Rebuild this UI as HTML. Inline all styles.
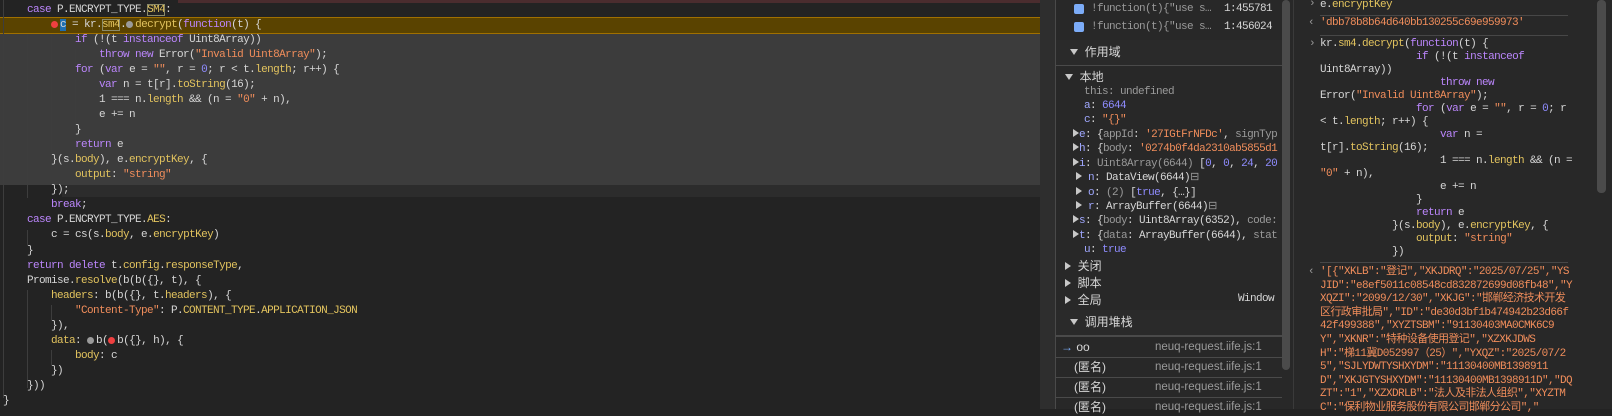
<!DOCTYPE html>
<html><head><meta charset="utf-8"><style>
*{margin:0;padding:0;box-sizing:border-box}
body{width:1612px;height:409px;overflow:hidden;background:#232323;position:relative;font-family:"Liberation Mono",monospace;font-size:11px;letter-spacing:-0.6px;color:#d6d6d6}
.abs{position:absolute}
.k{color:#bb86fc}.p{color:#e2c35e}.s{color:#f08d5b}.n{color:#8f8cff}.g{color:#9a9a9a}
#ed{left:0;top:0;width:1040px;height:409px;background:#232323;overflow:hidden}
.ln{position:absolute;left:3px;height:15px;line-height:15px;white-space:pre}
.guide{position:absolute;width:1px;background:#3d3d3d}
.dot{display:inline-block;width:7px;height:7px;border-radius:50%;margin:0 2px 0 0;vertical-align:-0.5px}
.box{outline:1px solid #8a8a6a;outline-offset:-1px}
#side{left:1040px;top:0;width:253px;height:409px;background:#282828}
.sr{position:absolute;white-space:pre;height:15px;line-height:15px}
.cjk{font-family:"Liberation Sans","Noto Sans CJK SC",sans-serif;font-size:12px;letter-spacing:0}
.tri{display:inline-block;width:0;height:0;border-left:4px solid transparent;border-right:4px solid transparent;border-top:6px solid #c8c8c8;vertical-align:1px}
.trr{display:inline-block;width:0;height:0;border-top:4px solid transparent;border-bottom:4px solid transparent;border-left:6px solid #c8c8c8;vertical-align:0px}
#con{left:1293px;top:0;width:319px;height:409px;background:#282828;border-left:1px solid #3a3a3a}
.cl{position:absolute;left:26px;white-space:pre;line-height:13px}
.sep{position:absolute;left:26px;width:248px;height:1px;background:#474747}
</style></head><body>
<div id="ed" class="abs">
<div class="abs" style="left:178px;top:0;width:862px;height:3px;background:#4a2c2e"></div>
<div class="abs" style="left:0;top:17px;width:1040px;height:17px;background:#5a4300;border-top:1px solid #a07000;border-bottom:1px solid #a07000"></div>
<div class="abs" style="left:0;top:34px;width:1040px;height:151px;background:#3c3c3c"></div>
<div class="abs" style="left:62px;top:185px;width:978px;height:12px;background:#2c2c2c"></div>
<div class="guide" style="left:3px;top:0;height:398px"></div>
<div class="guide" style="left:27px;top:34px;height:164px"></div>
<div class="guide" style="left:27px;top:230px;height:15px"></div>
<div class="guide" style="left:27px;top:290px;height:98px"></div>
<div class="guide" style="left:51px;top:34px;height:136px"></div>
<div class="guide" style="left:51px;top:305px;height:15px"></div>
<div class="guide" style="left:51px;top:350px;height:15px"></div>
<div class="guide" style="left:75px;top:49px;height:15px"></div>
<div class="guide" style="left:75px;top:79px;height:45px"></div>
<div class="ln" style="top:3px">    <span class="k">case</span> P.ENCRYPT_TYPE.<span class="p box">SM4</span>:</div>
<div class="ln" style="top:18px">        <span class="dot" style="background:#ef4040"></span><span style="background:#1f6fb0">c</span> = kr.<span class="p box">sm4</span>.<span class="dot" style="background:#9a9a9a"></span><span class="p">decrypt</span>(<span class="k">function</span>(t) {</div>
<div class="ln" style="top:33px">            <span class="k">if</span> (!(t <span class="k">instanceof</span> Uint8Array))</div>
<div class="ln" style="top:48px">                <span class="k">throw new</span> Error(<span class="s">"Invalid Uint8Array"</span>);</div>
<div class="ln" style="top:63px">            <span class="k">for</span> (<span class="k">var</span> e = <span class="s">""</span>, r = <span class="n">0</span>; r &lt; t.<span class="p">length</span>; r++) {</div>
<div class="ln" style="top:78px">                <span class="k">var</span> n = t[r].<span class="p">toString</span>(16);</div>
<div class="ln" style="top:93px">                1 === n.<span class="p">length</span> &amp;&amp; (n = <span class="s">"0"</span> + n),</div>
<div class="ln" style="top:108px">                e += n</div>
<div class="ln" style="top:123px">            }</div>
<div class="ln" style="top:138px">            <span class="k">return</span> e</div>
<div class="ln" style="top:153px">        }(s.<span class="p">body</span>), e.<span class="p">encryptKey</span>, {</div>
<div class="ln" style="top:168px">            <span class="p">output</span>: <span class="s">"string"</span></div>
<div class="ln" style="top:183px">        });</div>
<div class="ln" style="top:198px">        <span class="k">break</span>;</div>
<div class="ln" style="top:213px">    <span class="k">case</span> P.ENCRYPT_TYPE.<span class="p">AES</span>:</div>
<div class="ln" style="top:228px">        c = cs(s.<span class="p">body</span>, e.<span class="p">encryptKey</span>)</div>
<div class="ln" style="top:244px">    }</div>
<div class="ln" style="top:259px">    <span class="k">return delete</span> t.<span class="p">config</span>.<span class="p">responseType</span>,</div>
<div class="ln" style="top:274px">    Promise.<span class="p">resolve</span>(b(b({}, t), {</div>
<div class="ln" style="top:289px">        <span class="p">headers</span>: b(b({}, t.<span class="p">headers</span>), {</div>
<div class="ln" style="top:304px">            <span class="s">"Content-Type"</span>: P.<span class="p">CONTENT_TYPE</span>.<span class="p">APPLICATION_JSON</span></div>
<div class="ln" style="top:319px">        }),</div>
<div class="ln" style="top:334px">        <span class="p">data</span>: <span class="dot" style="background:#9a9a9a"></span>b(<span class="dot" style="background:#ef4040"></span>b({}, h), {</div>
<div class="ln" style="top:349px">            <span class="p">body</span>: c</div>
<div class="ln" style="top:364px">        })</div>
<div class="ln" style="top:379px">    }))</div>
<div class="ln" style="top:394px">}</div>
</div>

<div id="side" class="abs">
<div class="abs" style="left:0;top:0;width:15px;height:409px;background:#2e2e2e"></div>
<div class="abs" style="left:15px;top:0;width:1px;height:409px;background:#4a4a4a"></div>
<div class="abs" style="left:16px;top:40px;width:226px;height:26px;background:#2a2a2a;border-bottom:1px solid #4a4a4a"></div>
<div class="abs" style="left:16px;top:310px;width:226px;height:27px;background:#2a2a2a;border-bottom:2px solid #4a4a4a"></div>
<div class="abs" style="left:16px;top:357px;width:226px;height:1px;background:#4a4a4a"></div>
<div class="abs" style="left:16px;top:377px;width:226px;height:1px;background:#4a4a4a"></div>
<div class="abs" style="left:16px;top:397px;width:226px;height:1px;background:#4a4a4a"></div>
<div class="abs" style="left:242px;top:0;width:11px;height:409px;background:#282828"></div>
<div class="abs" style="left:242px;top:0;width:8px;height:370px;background:#4b4b4b;border-radius:4px"></div>
<div class="abs" style="left:34px;top:4px;width:10px;height:10px;background:#7cacf8;border-radius:2px"></div>
<div class="abs" style="left:34px;top:22px;width:10px;height:10px;background:#7cacf8;border-radius:2px"></div>
<div class="sr g" style="left:51px;top:2px">!function(t){"use s…</div><div class="sr" style="left:184px;top:2px">1:455781</div>
<div class="sr g" style="left:51px;top:20px">!function(t){"use s…</div><div class="sr" style="left:184px;top:20px">1:456024</div>
<div class="sr cjk" style="left:30px;top:44px;line-height:16px"><span class="tri"></span>  作用域</div>
<div class="sr cjk" style="left:25px;top:69px;line-height:16px"><span class="tri"></span>  本地</div>
<div class="sr g" style="left:44px;top:85px">this: undefined</div>
<div class="sr" style="left:44px;top:99px"><span style="color:#a0a8ff">a</span>: <span class="n">6644</span></div>
<div class="sr" style="left:44px;top:113px"><span style="color:#a0a8ff">c</span>: <span class="s">"{}"</span></div>
<div class="sr" style="left:33px;top:128px"><span class="trr"></span><span style="color:#a0a8ff">e</span>: {<span class="g">appId</span>: <span class="s">'27IGtFrNFDc'</span>, <span class="g">signTyp</span></div>
<div class="sr" style="left:33px;top:142px"><span class="trr"></span><span style="color:#a0a8ff">h</span>: {<span class="g">body</span>: <span class="s">'0274b0f4da2310ab5855d1</span></div>
<div class="sr" style="left:33px;top:157px"><span class="trr"></span><span style="color:#a0a8ff">i</span>: <span class="g">Uint8Array(6644)</span> [<span class="n">0</span>, <span class="n">0</span>, <span class="n">24</span>, <span class="n">20</span></div>
<div class="sr" style="left:36px;top:171px"><span class="trr"></span> <span style="color:#a0a8ff">n</span>: DataView(6644)<span class="g">⊟</span></div>
<div class="sr" style="left:36px;top:186px"><span class="trr"></span> <span style="color:#a0a8ff">o</span>: <span class="g">(2)</span> [<span class="n">true</span>, {…}]</div>
<div class="sr" style="left:36px;top:200px"><span class="trr"></span> <span style="color:#a0a8ff">r</span>: ArrayBuffer(6644)<span class="g">⊟</span></div>
<div class="sr" style="left:33px;top:214px"><span class="trr"></span><span style="color:#a0a8ff">s</span>: {<span class="g">body</span>: Uint8Array(6352), <span class="g">code:</span></div>
<div class="sr" style="left:33px;top:229px"><span class="trr"></span><span style="color:#a0a8ff">t</span>: {<span class="g">data</span>: ArrayBuffer(6644), <span class="g">stat</span></div>
<div class="sr" style="left:44px;top:243px"><span style="color:#a0a8ff">u</span>: <span class="n">true</span></div>
<div class="sr cjk" style="left:25px;top:258px;line-height:16px"><span class="trr"></span>  关闭</div>
<div class="sr cjk" style="left:25px;top:275px;line-height:16px"><span class="trr"></span>  脚本</div>
<div class="sr cjk" style="left:25px;top:292px;line-height:16px"><span class="trr"></span>  全局</div>
<div class="sr" style="left:198px;top:292px">Window</div>
<div class="sr cjk" style="left:30px;top:314px;line-height:16px"><span class="tri"></span>  调用堆栈</div>
<div class="sr cjk" style="left:21px;top:339px;line-height:16px"><span style="color:#7cacf8">→</span> oo</div>
<div class="sr cjk g" style="left:115px;top:339px;line-height:16px;font-size:11.5px">neuq-request.iife.js:1</div>
<div class="sr cjk" style="left:34px;top:359px;line-height:16px">(匿名)</div>
<div class="sr cjk g" style="left:115px;top:359px;line-height:16px;font-size:11.5px">neuq-request.iife.js:1</div>
<div class="sr cjk" style="left:34px;top:379px;line-height:16px">(匿名)</div>
<div class="sr cjk g" style="left:115px;top:379px;line-height:16px;font-size:11.5px">neuq-request.iife.js:1</div>
<div class="sr cjk" style="left:34px;top:399px;line-height:16px">(匿名)</div>
<div class="sr cjk g" style="left:115px;top:399px;line-height:16px;font-size:11.5px">neuq-request.iife.js:1</div>
</div>

<div id="con" class="abs">
<div class="abs" style="left:303px;top:0;width:9px;height:193px;background:#4b4b4b;border-radius:4px"></div>
<div class="cl g" style="left:15px;top:-2px">›</div>
<div class="cl" style="top:-1px">e.<span class="p">encryptKey</span></div>
<div class="sep" style="top:15px"></div>
<div class="cl g" style="left:14px;top:17px">‹</div>
<div class="cl s" style="top:17px">'dbb78b8b64d640bb130255c69e959973'</div>
<div class="sep" style="top:35px"></div>
<div class="cl g" style="left:15px;top:38px">›</div>
<div class="cl" style="top:38px">kr.<span class="p">sm4</span>.<span class="p">decrypt</span>(<span class="k">function</span>(t) {
                <span class="k">if</span> (!(t <span class="k">instanceof</span>
Uint8Array))
                    <span class="k">throw new</span>
Error(<span class="s">"Invalid Uint8Array"</span>);
                <span class="k">for</span> (<span class="k">var</span> e = <span class="s">""</span>, r = <span class="n">0</span>; r
&lt; t.<span class="p">length</span>; r++) {
                    <span class="k">var</span> n =
t[r].<span class="p">toString</span>(16);
                    1 === n.<span class="p">length</span> &amp;&amp; (n =
<span class="s">"0"</span> + n),
                    e += n
                }
                <span class="k">return</span> e
            }(s.<span class="p">body</span>), e.<span class="p">encryptKey</span>, {
                <span class="p">output</span>: <span class="s">"string"</span>
            })</div>
<div class="sep" style="top:262px"></div>
<div class="cl g" style="left:14px;top:266px">‹</div>
<div class="cl s" style="top:266px;line-height:13.6px;font-family:'Liberation Mono','Noto Sans CJK SC',monospace">'[{"XKLB":"登记","XKJDRQ":"2025/07/25","YS
JID":"e8ef5011c08548cd832872699d08fb48","Y
XQZI":"2099/12/30","XKJG":"邯郸经济技术开发
区行政审批局","ID":"de30d3bf1b474942b23d66f
42f499388","XYZTSBM":"91130403MA0CMK6C9
Y","XKNR":"特种设备使用登记","XZXKJDWS
H":"梯11冀D052997（25）","YXQZ":"2025/07/2
5","SJLYDWTYSHXYDM":"11130400MB1398911
D","XKJGTYSHXYDM":"11130400MB1398911D","DQ
ZT":"1","XZXDRLB":"法人及非法人组织","XYZTM
C":"保利物业服务股份有限公司邯郸分公司","</div>
</div>
</body></html>
